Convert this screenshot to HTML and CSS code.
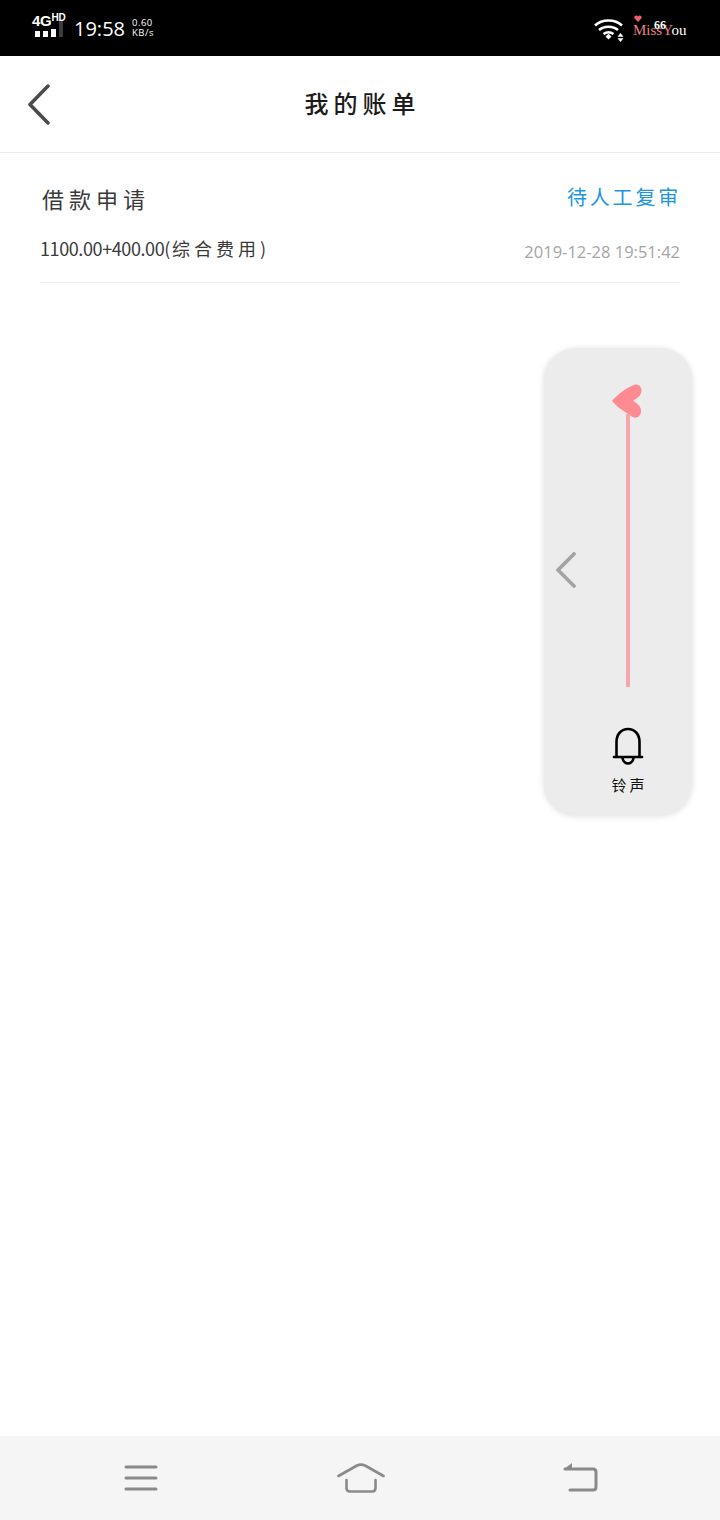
FILE: index.html
```html
<!DOCTYPE html>
<html lang="zh">
<head>
<meta charset="utf-8">
<title>我的账单</title>
<link rel="stylesheet" href="styles.css">
</head>
<body>
<div class="page">
  <div class="status">
    <div class="status-left">
      <div class="net">
        <div class="net-top"><span class="g4">4G</span><span class="hd">HD</span></div>
        <div class="bars"><i class="b"></i><i class="b"></i><i class="b"></i><i class="b dim"></i></div>
      </div>
      <span class="clock">19:58</span>
      <div class="speed"><span>0.60</span><span>KB/s</span></div>
    </div>
    <div class="status-right">
      <svg class="wifi" width="32" height="24" viewBox="0 0 32 24" fill="none" stroke="#fff" stroke-width="2.500">
        <path d="M1 7.500C8 .8 21 .8 28 7.500"/>
        <path d="M5 12C10 7.500 19 7.500 24 12"/>
        <path d="M9.500 16C12.500 13.800 16.500 13.800 19.500 16"/>
        <path d="M11.500 18.500L14.500 15.800L17.500 18.500L14.500 21.500Z" fill="#fff" stroke="none"/>
        <path d="M26.500 15L29.500 18.800H23.500Z M26.500 24L29.500 20.300H23.500Z" fill="#fff" stroke="none"/>
      </svg>
      <div class="miss">
        <svg class="miss-heart" width="8" height="7" viewBox="0 0 8 7"><path d="M4 7L.5 3.200C-.6 1.400 2.600-.8 4 1.600 5.400-.8 8.600 1.400 7.500 3.200Z" fill="#f0606a"/></svg>
        <span class="miss-red">MissY</span><span class="miss-white">ou</span>
        <span class="miss-66">66</span>
      </div>
    </div>
  </div>

  <header class="head">
    <svg class="back" width="24" height="42" viewBox="0 0 24 42" fill="none" stroke="#4a4a4a" stroke-width="3.500" stroke-linecap="round" stroke-linejoin="round"><path d="M21 2L3 20.500L21 39"/></svg>
    <h1 class="title">我的账单</h1>
  </header>

  <main class="list">
    <article class="item">
      <div class="row row-top">
        <span class="name">借款申请</span>
        <span class="state">待人工复审</span>
      </div>
      <div class="row row-bottom">
        <span class="amount"><span class="amount-num">1100.00+400.00(</span><span class="amount-cjk">综合费用</span>)</span>
        <span class="time">2019-12-28 19:51:42</span>
      </div>
    </article>
  </main>

  <aside class="panel">
    <svg class="panel-arrow" width="22" height="36" viewBox="0 0 22 36" fill="none" stroke="#a3a3a3" stroke-width="3.800" stroke-linecap="round" stroke-linejoin="round"><path d="M19 2L3 18L19 34"/></svg>
    <div class="panel-col">
      <div class="slider">
        <svg class="heart" width="32" height="36" viewBox="0 0 32 36"><path d="M1 18C3 15 14 5 23 2C28 0 32 5 30 10C29 14 24 16 22 18C25 19 31 24 30 29C29 35 24 36 20 33C12 28 4 22 1 18Z" fill="#ff8a92"/></svg>
        <div class="track"></div>
      </div>
      <svg class="bell" width="32" height="38" viewBox="0 0 32 38" fill="none" stroke="#000" stroke-width="2.600" stroke-linecap="round" stroke-linejoin="round">
        <path d="M4.500 29.500V15C4.500 7 9.500 2 16 2S27.500 7 27.500 15V29.500"/>
        <path d="M2 30H30"/>
        <path d="M10.500 31C11 35 14 36.500 16 36.500S21 35 21.500 31"/>
      </svg>
      <span class="bell-label">铃声</span>
    </div>
  </aside>

  <nav class="nav">
    <svg class="nav-menu" width="34" height="28" viewBox="0 0 34 28" fill="none" stroke="#8a8a8a" stroke-width="3" stroke-linecap="round"><path d="M2 3H32M2 14H32M2 25H32"/></svg>
    <svg class="nav-home" width="48" height="30" viewBox="0 0 48 30" fill="none" stroke="#8a8a8a" stroke-width="2.600" stroke-linecap="round" stroke-linejoin="round"><path d="M1.500 13L20 2.500Q24 .8 28 2.500L46.500 13"/><path d="M9.500 17V25Q9.500 28.500 13 28.500H35Q38.500 28.500 38.500 25V17"/></svg>
    <svg class="nav-back" width="36" height="30" viewBox="0 0 36 30" fill="none" stroke="#8a8a8a" stroke-width="3" stroke-linecap="round" stroke-linejoin="round"><path d="M3 6H31Q34 6 34 9V24Q34 27 31 27H8"/><path d="M10 0V6H2Z" fill="#8a8a8a" stroke="none"/></svg>
  </nav>
</div>
</body>
</html>
```
FILE: styles.css
```css
* { box-sizing: border-box; }
html, body { margin: 0; padding: 0; background: #fff; }
body { font-family: "Noto Sans CJK SC", "Noto Sans", sans-serif; }
.page {
  position: relative;
  width: 720px;
  height: 1520px;
  display: flex;
  flex-direction: column;
  overflow: hidden;
  background: #fff;
}
.status {
  height: 56px;
  flex: none;
  background: #000;
  color: #fff;
  display: flex;
  justify-content: space-between;
  align-items: center;
  padding: 0 32px;
}
.status-left { display: flex; align-items: center; }
.net { width: 34px; display: flex; flex-direction: column; margin-top: -7px; }
.net-top { display: flex; align-items: flex-start; height: 15px; color: #fff; font-family: "Liberation Sans", sans-serif; font-weight: 700; line-height: 1; }
.g4 { font-size: 15px; letter-spacing: -0.3px; }
.hd { font-size: 10px; letter-spacing: -0.2px; }
.bars { display: flex; gap: 3px; align-items: flex-end; height: 9px; margin-left: 3px; }
.b { display: block; flex: none; width: 5px; height: 6px; background: #fff; }
.b:nth-child(3) { height: 8px; }
.b.dim { height: 16px; width: 4px; background: #3c3c3c; }
.clock { font-family: "Open Sans", sans-serif; font-weight: 400; font-size: 20px; margin-left: 8px; margin-top: 2px; line-height: 1; color: #fff; }
.speed { display: flex; flex-direction: column; font-family: "Open Sans", sans-serif; font-weight: 400; font-size: 9.500px; line-height: 10px; margin-left: 7px; margin-top: -1px; letter-spacing: .5px; }
.status-right { display: flex; align-items: center; position: relative; }
.wifi { margin-right: 7px; margin-top: 3px; margin-left: -2px; }
.miss { position: relative; width: 56px; height: 30px; margin-right: -1px; font-family: "Liberation Serif", serif; font-size: 15px; font-weight: 400; line-height: 1; white-space: nowrap; padding-top: 10px; }
.miss-heart { position: absolute; left: 1px; top: 2px; }
.miss-red { color: #e88086; }
.miss-white { color: #fff; }
.miss-66 { position: absolute; left: 21px; top: 6px; font-size: 12px; font-weight: 700; color: #fff; }
.head {
  position: relative;
  height: 97px;
  flex: none;
  display: flex;
  align-items: center;
  justify-content: center;
  border-bottom: 1px solid #ececec;
}
.back { position: absolute; left: 27px; top: 28px; }
.title { margin: -3px 0 0; font-size: 24px; font-weight: 500; letter-spacing: 5px; color: #1c1c1c; line-height: 1; padding-left: 5px; }
.list { padding: 0 40px; }
.item { height: 130px; border-bottom: 1px solid #eeeeee; padding-top: 30px; }
.row { display: flex; justify-content: space-between; }
.row-top { height: 30px; align-items: center; }
.row-bottom { height: 30px; margin-top: 23px; align-items: center; }
.name { font-size: 22px; font-weight: 400; letter-spacing: 5px; color: #3a3a3a; margin-left: 2px; line-height: 30px; }
.state { font-size: 20px; font-weight: 400; letter-spacing: 2.800px; color: #2196e0; margin-top: -3px; margin-right: -1px; }
.amount { font-size: 18px; font-weight: 400; color: #3a3a3a; margin-top: -6px; line-height: 1; }
.amount-num { letter-spacing: -.4px; }
.amount-cjk { letter-spacing: 4px; margin-left: 2px; }
.time { font-size: 16.500px; font-family: "Open Sans", sans-serif; font-weight: 400; color: #a4a4a4; margin-top: 3px; line-height: 1; }
.panel {
  position: absolute;
  left: 544px;
  top: 348px;
  width: 148px;
  height: 467px;
  border-radius: 32px;
  background: #ececec;
  box-shadow: 0 1px 6px rgba(0,0,0,.14);
  display: flex;
}
.panel-arrow { position: absolute; left: 11px; top: 204px; }
.panel-col { width: 100%; display: flex; flex-direction: column; align-items: center; padding: 35px 0 0 20px; }
.slider { display: flex; flex-direction: column; align-items: center; height: 306px; }
.heart { margin-left: -3px; flex: none; }
.track { width: 3.500px; height: 273px; margin-top: -5px; background: #f6a5ac; flex: none; }
.bell { margin-top: 38px; flex: none; }
.bell-label { margin-top: 10px; font-size: 15px; font-weight: 400; letter-spacing: 3px; padding-left: 3px; color: #111; line-height: 20px; }
.nav {
  margin-top: auto;
  height: 84px;
  flex: none;
  background: #f5f5f5;
  display: grid;
  grid-template-columns: 124px 34px 179px 48px 177px 36px;
  padding-top: 27px;
  align-items: start;
}
.nav-menu { grid-column: 2; margin-top: 1px; }
.nav-home { grid-column: 4; }
.nav-back { grid-column: 6; }
```
